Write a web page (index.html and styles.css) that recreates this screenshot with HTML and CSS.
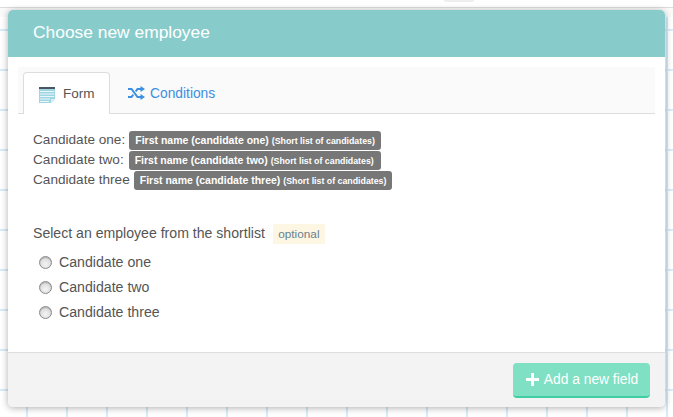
FILE: index.html
```html
<!DOCTYPE html>
<html lang="en">
<head>
<meta charset="utf-8">
<title>Choose new employee</title>
<link rel="stylesheet" href="styles.css">
</head>
<body>
<div class="top-pill"></div>
<div class="modal">
  <header class="modal-header">Choose new employee</header>
  <div class="modal-body">
    <nav class="tabs">
      <a class="tab tab-active">
        <svg class="icon-form" width="16" height="16" viewBox="0 0 16 16">
          <rect x="0" y="0" width="16" height="2" fill="#4a5560"/>
          <path d="M0 2h16v10l-4 4H0z" fill="#9fd6e4"/>
          <path d="M1 4.500h14M1 7h14M1 9.500h14M1 12h10M1 14.500h9" stroke="#eaf6f9" stroke-width="1"/>
          <path d="M16 12l-4 4v-4z" fill="#d5edf3"/>
        </svg>
        <span>Form</span>
      </a>
      <a class="tab tab-link">
        <svg class="icon-shuffle" width="17" height="14" viewBox="0 0 17 14">
          <path d="M0 3h3.500l6 8H13M0 11h3.500l1.800-2.400M7.700 5.400L9.500 3H13" fill="none" stroke="#3d8fe0" stroke-width="2"/>
          <path d="M12.500 0L17 3l-4.500 3zM12.500 8L17 11l-4.500 3z" fill="#3d8fe0"/>
        </svg>
        <span>Conditions</span>
      </a>
    </nav>
    <div class="candidates">
      <div class="candidate"><span class="cand-name">Candidate one:</span><span class="badge">First name (candidate one) <small>(Short list of candidates)</small></span></div>
      <div class="candidate"><span class="cand-name">Candidate two:</span><span class="badge">First name (candidate two) <small>(Short list of candidates)</small></span></div>
      <div class="candidate"><span class="cand-name">Candidate three</span><span class="badge">First name (candidate three) <small>(Short list of candidates)</small></span></div>
    </div>
    <div class="question">
      <span class="question-text">Select an employee from the shortlist</span>
      <span class="optional">optional</span>
    </div>
    <div class="options">
      <label class="option"><span class="radio"></span>Candidate one</label>
      <label class="option"><span class="radio"></span>Candidate two</label>
      <label class="option"><span class="radio"></span>Candidate three</label>
    </div>
  </div>
  <footer class="modal-footer">
    <button class="add-btn" type="button">
      <svg width="13" height="13" viewBox="0 0 13 13"><path d="M5 0h3v5h5v3H8v5H5V8H0V5h5z" fill="#fff"/></svg>
      <span>Add a new field</span>
    </button>
  </footer>
</div>
</body>
</html>
```
FILE: styles.css
```css
* { box-sizing: border-box; }
html, body { height: 100%; }
body {
  margin: 0;
  padding: 10px 8px 0;
  overflow: hidden;
  font-family: "Liberation Sans", Arial, sans-serif;
  font-size: 14px;
  color: #555;
  background-color: #fff;
  background-image:
    linear-gradient(#dcdcdc, #dcdcdc),
    linear-gradient(#fafafa, #fafafa),
    linear-gradient(to right, #d6ecf9 2px, transparent 2px),
    linear-gradient(to bottom, #d6ecf9 2px, transparent 2px);
  background-size: 100% 1px, 100% 9px, 40px 100%, 100% 40px;
  background-position: 0 7px, 0 8px, 26px 8px, 0 29px;
  background-repeat: no-repeat, no-repeat, repeat-x, repeat-y;
}
.top-pill {
  position: absolute;
  left: 443px;
  top: -6px;
  width: 32px;
  height: 8px;
  border-radius: 4px;
  background: #eee;
}
.modal {
  width: 657px;
  height: 397px;
  display: flex;
  flex-direction: column;
  background: #fff;
  border-radius: 5px;
  overflow: hidden;
  box-shadow: 0 1px 7px rgba(0, 0, 0, 0.32);
}
.modal-header {
  height: 47px;
  flex: none;
  padding: 0 25px 2px;
  display: flex;
  align-items: center;
  background: #87cccb;
  color: #fff;
  font-size: 17.400px;
}
.modal-body {
  flex: 1;
  padding: 10px 10px 0;
}
.tabs {
  display: flex;
  height: 47px;
  padding: 5px 0 0 5px;
  background: #fafafa;
  border-bottom: 1px solid #ddd;
}
.tab {
  height: 42px;
  display: flex;
  align-items: center;
  font-size: 14px;
}
.tab-active {
  width: 87px;
  padding-left: 15px;
  gap: 8px;
  background: #fff;
  border: 1px solid #ddd;
  border-bottom: 0;
  border-radius: 4px 4px 0 0;
  color: #555;
  font-size: 13.500px;
}
.tab-link {
  padding-left: 18px;
  gap: 5px;
  color: #3d8fe0;
  font-size: 13.800px;
}
.icon-form { margin-top: 3px; }
.candidates {
  margin: 17px 0 0 15px;
}
.candidate {
  display: flex;
  height: 20px;
  white-space: nowrap;
}
.cand-name {
  font-size: 13.600px;
  line-height: 17px;
  margin-right: 4px;
}
.candidate:nth-child(2) .cand-name { margin-right: 5px; }
.candidate:nth-child(2) .badge { padding-right: 7px; }
.badge {
  height: 19px;
  line-height: 19px;
  padding: 0 6px;
  background: #777;
  border-radius: 3px;
  color: #fff;
  font-size: 10.500px;
  font-weight: bold;
}
.badge small { font-size: 8.800px; }
.question {
  margin: 33px 0 0 15px;
  display: flex;
  align-items: center;
  gap: 8px;
  height: 20px;
}
.question-text {
  font-size: 14.100px;
  margin-top: -3px;
}
.optional {
  width: 52px;
  height: 20px;
  line-height: 20px;
  text-align: center;
  background: #fcf6e3;
  color: #6b7f8f;
  font-size: 11.800px;
}
.options {
  margin: 6px 0 0 21px;
}
.option {
  display: flex;
  align-items: center;
  gap: 7px;
  height: 25px;
  font-size: 14.150px;
  line-height: 23px;
}
.radio {
  width: 13px;
  height: 13px;
  margin-top: -1px;
  border-radius: 50%;
  border: 1px solid #8a8a8a;
  background: radial-gradient(circle at 50% 65%, #f4f4f4, #cfcfcf);
  box-shadow: inset 0 1px 1px rgba(0, 0, 0, 0.2);
}
.modal-footer {
  height: 55px;
  flex: none;
  padding: 10px 15px 0 0;
  display: flex;
  justify-content: flex-end;
  align-items: flex-start;
  background: #f3f3f3;
  border-top: 1px solid #ddd;
}
.add-btn {
  width: 137px;
  height: 35px;
  padding: 0 0 0 1px;
  display: flex;
  align-items: center;
  justify-content: center;
  gap: 5px;
  background: #7fe0c3;
  border: 0;
  border-bottom: 2px solid #3fcda3;
  border-radius: 4px;
  color: #fff;
  font-family: inherit;
  font-size: 13.800px;
}
```
